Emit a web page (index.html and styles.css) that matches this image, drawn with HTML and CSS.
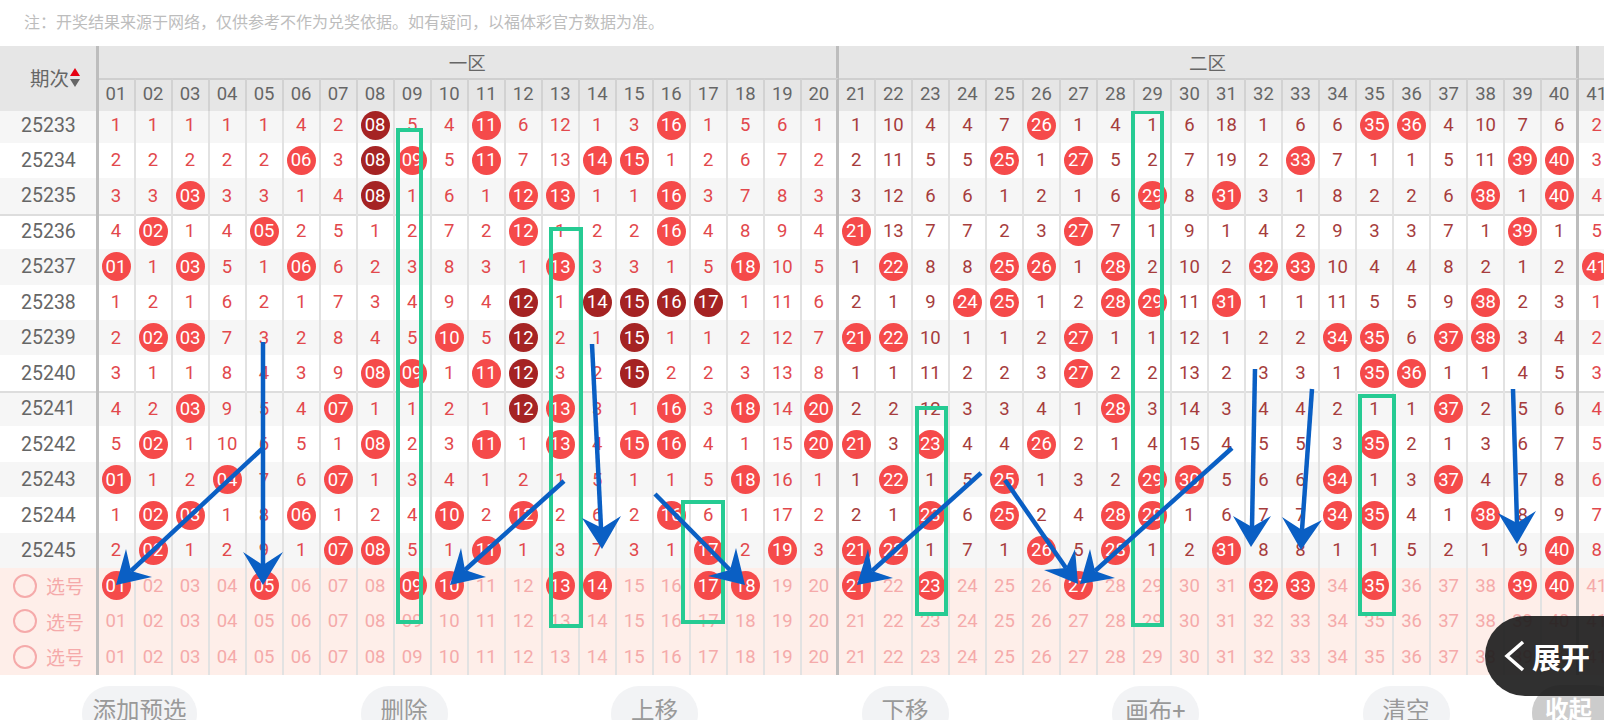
FILE: index.html
```html
<!DOCTYPE html>
<html lang="zh-CN">
<head>
    <meta charset="UTF-8" />
    <title>走势图</title>
    <link rel="stylesheet" href="styles.css">
</head>
<body>
    <div class="page">
        <p class="note">注：开奖结果来源于网络，仅供参考不作为兑奖依据。如有疑问，以福体彩官方数据为准。</p>

        <div class="chart" id="chart">
            <div class="head" id="head">
                <div class="corner">
                    <span>期次</span>
                    <span class="sort"><i class="sort-up"></i><i class="sort-down"></i></span>
                </div>
                <div class="zone">一区</div>
                <div class="zone">二区</div>
                <div class="zone-rest"></div>
            </div>
        </div>

        <div class="actions">
            <button class="btn">添加预选</button>
            <button class="btn">删除</button>
            <button class="btn">上移</button>
            <button class="btn">下移</button>
            <button class="btn">画布+</button>
            <button class="btn">清空</button>
        </div>

        <button class="collapse">收起</button>
        <div class="expand">
            <svg width="22" height="32" viewBox="0 0 22 32"><path class="chevron" d="M19 2 L3 16 L19 30" /></svg>
            <span>展开</span>
        </div>

        <!-- hand drawn marks on top of the chart -->
        <svg class="marks" width="1604" height="720" viewBox="0 0 1604 720">
            <rect class="box" x="398" y="130" width="23" height="492" />
            <rect class="box" x="551" y="229" width="30" height="397" />
            <rect class="box" x="683" y="502" width="40" height="120" />
            <rect class="box" x="917" y="408" width="29" height="206" />
            <rect class="box" x="1133" y="112" width="29" height="513" />
            <rect class="box" x="1360" y="396" width="34" height="218" />

            <path class="shaft" d="M263 448 L131 571" /><polygon class="tip" points="116,585 126,549 131,571 152,577" />
            <path class="shaft" d="M263 342 L263 565" /><polygon class="tip" points="263,585 243,552 263,565 283,552" />
            <path class="shaft" d="M564 481 L465 570" /><polygon class="tip" points="450,585 461,548 465,570 486,577" />
            <path class="shaft" d="M592 344 L601 528" /><polygon class="tip" points="602,549 582,518 602,528 621,516" />
            <path class="shaft" d="M655 494 L730 570" /><polygon class="tip" points="745,585 736,548 730,570 708,576" />
            <path class="shaft" d="M981 473 L872 571" /><polygon class="tip" points="857,585 868,549 872,571 893,578" />
            <path class="shaft" d="M1005 480 L1066 568" /><polygon class="tip" points="1078,584 1075,549 1066,568 1044,570" />
            <path class="shaft" d="M1232 448 L1095 571" /><polygon class="tip" points="1080,584 1090,549 1095,571 1115,578" />
            <path class="shaft" d="M1255 369 L1252 527" /><polygon class="tip" points="1251,547 1233,516 1252,527 1271,516" />
            <path class="shaft" d="M1312 389 L1302 530" /><polygon class="tip" points="1301,550 1282,517 1302,530 1322,520" />
            <path class="shaft" d="M1513 389 L1517 523" /><polygon class="tip" points="1517,544 1498,513 1517,523 1536,511" />
        </svg>
    </div>

    <script>
        // o = drawn number, x = drawn number repeated (dark ball), otherwise the miss count
        const draws = [
            ["25233", "1 1 1 1 1 4 2 x 5 4 o 6 12 1 3 o 1 5 6 1 1 10 4 4 7 o 1 4 1 6 18 1 6 6 o o 4 10 7 6 2"],
            ["25234", "2 2 2 2 2 o 3 x o 5 o 7 13 o o 1 2 6 7 2 2 11 5 5 o 1 o 5 2 7 19 2 o 7 1 1 5 11 o o 3"],
            ["25235", "3 3 o 3 3 1 4 x 1 6 1 o o 1 1 o 3 7 8 3 3 12 6 6 1 2 1 6 o 8 o 3 1 8 2 2 6 o 1 o 4"],
            ["25236", "4 o 1 4 o 2 5 1 2 7 2 o 1 2 2 o 4 8 9 4 o 13 7 7 2 3 o 7 1 9 1 4 2 9 3 3 7 1 o 1 5"],
            ["25237", "o 1 o 5 1 o 6 2 3 8 3 1 o 3 3 1 5 o 10 5 1 o 8 8 o o 1 o 2 10 2 o o 10 4 4 8 2 1 2 o"],
            ["25238", "1 2 1 6 2 1 7 3 4 9 4 x 1 x x x x 1 11 6 2 1 9 o o 1 2 o o 11 o 1 1 11 5 5 9 o 2 3 1"],
            ["25239", "2 o o 7 3 2 8 4 5 o 5 x 2 1 x 1 1 2 12 7 o o 10 1 1 2 o 1 1 12 1 2 2 o o 6 o o 3 4 2"],
            ["25240", "3 1 1 8 4 3 9 o o 1 o x 3 2 x 2 2 3 13 8 1 1 11 2 2 3 o 2 2 13 2 3 3 1 o o 1 1 4 5 3"],
            ["25241", "4 2 o 9 5 4 o 1 1 2 1 x o 3 1 o 3 o 14 o 2 2 12 3 3 4 1 o 3 14 3 4 4 2 1 1 o 2 5 6 4"],
            ["25242", "5 o 1 10 6 5 1 o 2 3 o 1 o 4 o o 4 1 15 o o 3 o 4 4 o 2 1 4 15 4 5 5 3 o 2 1 3 6 7 5"],
            ["25243", "o 1 2 o 7 6 o 1 3 4 1 2 1 5 1 1 5 o 16 1 1 o 1 5 o 1 3 2 o o 5 6 6 o 1 3 o 4 7 8 6"],
            ["25244", "1 o o 1 8 o 1 2 4 o 2 o 2 6 2 o 6 1 17 2 2 1 o 6 o 2 4 o o 1 6 7 7 o o 4 1 o 8 9 7"],
            ["25245", "2 o 1 2 9 1 o o 5 1 o 1 3 7 3 1 o 2 o 3 o o 1 7 1 o 5 o 1 2 o 8 8 1 1 5 2 1 9 o 8"]
        ];
        const picked = [1, 5, 9, 10, 13, 14, 17, 18, 21, 23, 27, 32, 33, 35, 39, 40];

        const label = (n) => String(n).padStart(2, "0");
        const zoneClass = (n) => (n > 40 ? "cell zone-c" : n > 20 ? "cell zone-b" : "cell zone-a");
        const edge = (n) => (n === 20 || n === 40 ? " edge" : "");

        const chart = document.getElementById("chart");
        const head = document.getElementById("head");

        for (let n = 1; n <= 41; n++) {
            head.insertAdjacentHTML("beforeend", `<div class="num${edge(n)}">${label(n)}</div>`);
        }

        draws.forEach(([issue, values], i) => {
            const cells = values.split(" ").map((v, c) => {
                const n = c + 1;
                let inner = v;
                if (v === "o") inner = `<span class="ball">${label(n)}</span>`;
                if (v === "x") inner = `<span class="ball dark">${label(n)}</span>`;
                return `<div class="${zoneClass(n)}${edge(n)}">${inner}</div>`;
            }).join("");
            const rowClass = "row" + (i % 2 === 0 ? " band" : "") + (i === 3 || i === 8 ? " group" : "");
            chart.insertAdjacentHTML("beforeend", `<div class="${rowClass}"><div class="issue">${issue}</div>${cells}</div>`);
        });

        for (let r = 0; r < 3; r++) {
            let cells = "";
            for (let n = 1; n <= 41; n++) {
                const on = r === 0 && picked.includes(n);
                cells += `<div class="cell pick${edge(n)}">${on ? `<span class="ball">${label(n)}</span>` : label(n)}</div>`;
            }
            chart.insertAdjacentHTML("beforeend", `<div class="row"><div class="issue pick-label"><i class="radio"></i><span>选号</span></div>${cells}</div>`);
        }
    </script>
</body>
</html>
```

FILE: styles.css
```css
body {
    margin: 0;
    background-color: #ffffff;
    font-family: Roboto, "Noto Sans CJK SC", sans-serif;
    overflow: hidden;
}

.page {
    position: relative;
    width: 1604px;
    height: 720px;
    overflow: hidden;
}

.note {
    margin: 0;
    height: 46px;
    padding-left: 24px;
    font-size: 16px;
    line-height: 46px;
    color: #bdbdbd;
}

.head,
.row {
    display: grid;
    grid-template-columns: 98.5px repeat(41, 37.02px);
    width: 1604px;
}

/* header sits a little over the first row, like a sticky header */
.head {
    position: relative;
    z-index: 1;
    grid-template-rows: 32px 32.7px;
    margin-bottom: -3.4px;
    background-color: #e6e6e6;
    color: #666666;
}

.corner {
    grid-row: span 2;
    display: flex;
    align-items: center;
    justify-content: flex-end;
    gap: 1px;
    box-sizing: border-box;
    padding: 0 15.5px 2px 0;
    border-right: 3px solid #bdbdbd;
    font-size: 19.5px;
}

.sort {
    display: flex;
    flex-direction: column;
    gap: 3px;
}

.sort i {
    width: 0;
    height: 0;
    border-left: 5px solid transparent;
    border-right: 5px solid transparent;
}

.sort-up {
    border-bottom: 8px solid #e60012;
}

.sort-down {
    border-top: 8px solid #666666;
}

.zone {
    grid-column: span 20;
    display: flex;
    align-items: center;
    justify-content: center;
    box-sizing: border-box;
    padding-bottom: 1px;
    border-right: 3px solid #bdbdbd;
    font-size: 18.5px;
}

.num {
    display: flex;
    align-items: center;
    justify-content: center;
    box-sizing: border-box;
    padding-bottom: 3px;
    border-top: 2px solid #cfcfcf;
    border-right: 2px solid #d2d2d2;
    font-size: 18.5px;
}

.row {
    height: 35.46px;
    box-sizing: border-box;
}

.band {
    background-color: #f6f6f6;
}

.group {
    box-shadow: inset 0 2px #dddddd;
}

.issue {
    display: flex;
    align-items: center;
    justify-content: flex-start;
    box-sizing: border-box;
    padding-left: 21px;
    border-right: 3px solid #bdbdbd;
    font-size: 19.5px;
    color: #666666;
}

.cell {
    display: flex;
    align-items: center;
    justify-content: center;
    box-sizing: border-box;
    border-right: 2px solid #e2e2e2;
    font-size: 18.5px;
}

.zone-a,
.zone-c {
    color: #e2484c;
}

.zone-b {
    color: #a63c3c;
}

.edge {
    border-right: 3px solid #bdbdbd;
}

.ball {
    display: flex;
    align-items: center;
    justify-content: center;
    flex: none;
    width: 29px;
    height: 29px;
    border-radius: 50%;
    background-color: #f54a4a;
    color: #ffffff;
}

.ball.dark {
    background-color: #a52323;
}

/* the three rows where numbers get picked */
.row:nth-last-child(-n+3) {
    background-color: #feeee9;
}

.pick {
    color: #f5aaaa;
}

.pick-label {
    gap: 9px;
    padding-left: 13px;
    font-size: 19px;
    color: #f5aaaa;
}

.radio {
    flex: none;
    box-sizing: border-box;
    width: 24px;
    height: 24px;
    border: 2px solid #f5aaaa;
    border-radius: 50%;
}

.actions {
    display: flex;
    gap: 163.5px;
    padding: 11px 0 0 82px;
}

.btn {
    flex: none;
    box-sizing: border-box;
    min-width: 87px;
    height: 56px;
    padding: 0 10.5px 10px;
    border: none;
    border-radius: 28px;
    background-color: #f2f3f5;
    font-family: inherit;
    font-size: 23.5px;
    color: #999999;
}

.collapse {
    position: absolute;
    top: 685px;
    left: 1532px;
    width: 90px;
    height: 56px;
    padding: 0 0 10px 13px;
    border: none;
    border-radius: 28px;
    background-color: #cccccc;
    font-family: inherit;
    font-size: 23.5px;
    font-weight: 700;
    text-align: left;
    color: #ffffff;
}

.expand {
    position: absolute;
    top: 616px;
    left: 1485px;
    right: 0;
    height: 80px;
    display: flex;
    align-items: center;
    gap: 6px;
    padding-left: 19px;
    border-radius: 40px 0 0 40px;
    background-color: rgba(30, 30, 30, 0.92);
    font-size: 29px;
    font-weight: 700;
    color: #ffffff;
}

.chevron {
    fill: none;
    stroke: #ffffff;
    stroke-width: 3.5;
}

.marks {
    position: absolute;
    top: 0;
    left: 0;
    pointer-events: none;
}

.box {
    fill: none;
    stroke: #26cb93;
    stroke-width: 4;
}

.shaft {
    fill: none;
    stroke: #0a5fc4;
    stroke-width: 4.5;
}

.tip {
    fill: #0a5fc4;
}
```
